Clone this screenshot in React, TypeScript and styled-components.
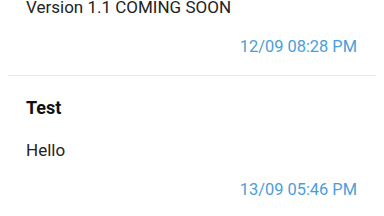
import React from "react";
import styled, { createGlobalStyle } from "styled-components";

const Global = createGlobalStyle`
  html, body { margin: 0; padding: 0; background: #ffffff; }
  body { font-family: Roboto, "Noto Sans", "Liberation Sans", sans-serif; overflow: hidden; }
`;

const Feed = styled.div`
  display: flex;
  flex-direction: column;
  width: 384px;
  margin-top: -2px;
`;

const Item = styled.div<{ $first?: boolean }>`
  display: flex;
  flex-direction: column;
  padding: ${(p) => (p.$first ? "0" : "22px")} 27px 19px 26px;
`;

const Divider = styled.div`
  height: 1px;
  margin: 0 8px;
  background: #e9e9e9;
`;

const Title = styled.div`
  font-size: 18px;
  line-height: 19px;
  font-weight: 700;
  color: #111111;
  margin-bottom: 24px;
`;

const Body = styled.div`
  font-size: 17px;
  line-height: 19px;
  color: #222222;
`;

const Stamp = styled.div`
  margin-top: 20px;
  text-align: right;
  font-size: 16.4px;
  line-height: 19px;
  color: #4a9edb;
`;

const items = [
  { title: "", body: "Version 1.1 COMING SOON", time: "12/09 08:28 PM" },
  { title: "Test", body: "Hello", time: "13/09 05:46 PM" },
];

export default function App() {
  return (
    <>
      <Global />
      <Feed>
        {items.map((it, i) => (
          <React.Fragment key={i}>
            {i > 0 && <Divider />}
            <Item $first={i === 0}>
              {it.title && <Title>{it.title}</Title>}
              <Body>{it.body}</Body>
              <Stamp>{it.time}</Stamp>
            </Item>
          </React.Fragment>
        ))}
      </Feed>
    </>
  );
}
